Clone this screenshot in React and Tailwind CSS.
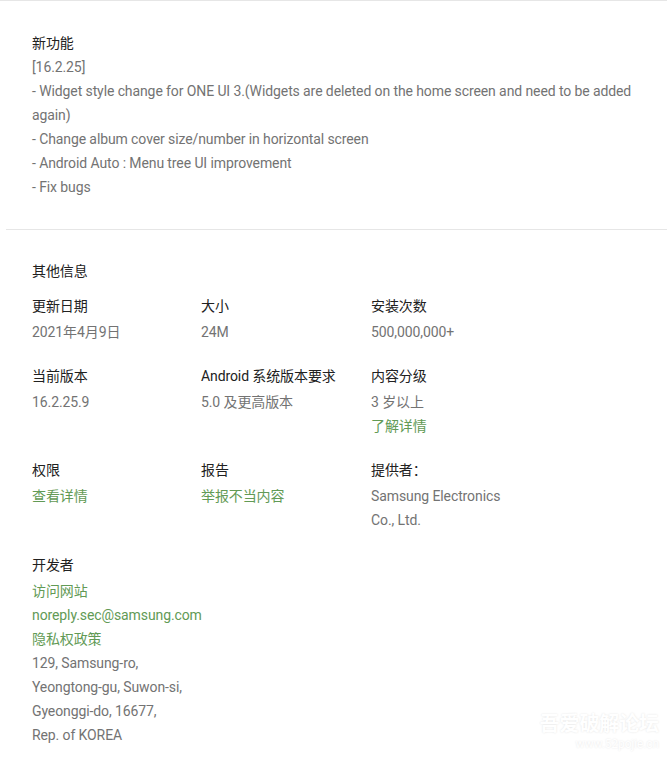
import React from 'react';

// App details block: "what's new" notes and the additional info grid
const notes = [
  '[16.2.25]',
  '- Widget style change for ONE UI 3.(Widgets are deleted on the home screen and need to be added again)',
  '- Change album cover size/number in horizontal screen',
  '- Android Auto : Menu tree UI improvement',
  '- Fix bugs',
];

const infoRows = [
  [
    { label: '更新日期', values: [{ text: '2021年4月9日' }] },
    { label: '大小', values: [{ text: '24M' }] },
    { label: '安装次数', values: [{ text: '500,000,000+' }] },
  ],
  [
    { label: '当前版本', values: [{ text: '16.2.25.9' }] },
    { label: 'Android 系统版本要求', values: [{ text: '5.0 及更高版本' }] },
    { label: '内容分级', values: [{ text: '3 岁以上' }, { text: '了解详情', link: true }] },
  ],
  [
    { label: '权限', values: [{ text: '查看详情', link: true }] },
    { label: '报告', values: [{ text: '举报不当内容', link: true }] },
    { label: '提供者：', values: [{ text: 'Samsung Electronics' }, { text: 'Co., Ltd.' }] },
  ],
];

const developer = [
  { text: '访问网站', link: true },
  { text: 'noreply.sec@samsung.com', link: true },
  { text: '隐私权政策', link: true },
  { text: '129, Samsung-ro,' },
  { text: 'Yeongtong-gu, Suwon-si,' },
  { text: 'Gyeonggi-do, 16677,' },
  { text: 'Rep. of KOREA' },
];

function Value({ item }) {
  return (
    <div className={`leading-6 ${item.link ? 'text-[#629a55]' : 'text-[#737373]'}`}>{item.text}</div>
  );
}

function InfoCell({ cell }) {
  return (
    <div>
      <div className="leading-6 text-[#212121]">{cell.label}</div>
      <div className="mt-[2px]">
        {cell.values.map((v, i) => (
          <Value key={i} item={v} />
        ))}
      </div>
    </div>
  );
}

export default function App() {
  return (
    <div
      className="relative w-[667px] h-[762px] overflow-hidden bg-white text-[14px] tracking-[-0.1px]"
      style={{ fontFamily: 'Roboto, "Noto Sans CJK SC", sans-serif' }}
    >
      <div className="border-t border-[#e6e6e6]" />

      {/* 新功能 */}
      <section className="pl-8 pr-6 pt-[30px] pb-[30px]">
        <div className="leading-6 text-[#212121]">新功能</div>
        {notes.map((line, i) => (
          <div key={i} className="leading-6 text-[#737373]">
            {line}
          </div>
        ))}
      </section>

      <div className="ml-[6px] border-t border-[#e6e6e6]" />

      {/* 其他信息 */}
      <section className="pl-8 pr-6 pt-[29px]">
        <div className="leading-6 text-[#212121]">其他信息</div>
        <div className="mt-[11px] flex flex-col gap-[20px]">
          {infoRows.map((row, i) => (
            <div key={i} className="grid grid-cols-[169px_170px_1fr]">
              {row.map((cell, j) => (
                <InfoCell key={j} cell={cell} />
              ))}
            </div>
          ))}
          <div className="mt-[1px]">
            <div className="leading-6 text-[#212121]">开发者</div>
            <div className="mt-[2px]">
              {developer.map((v, i) => (
                <Value key={i} item={v} />
              ))}
            </div>
          </div>
        </div>
      </section>

      {/* faint watermark */}
      <div className="absolute right-[8px] bottom-[10px] text-right leading-tight text-white [text-shadow:0_0_2px_#e2e2e2] select-none">
        <div className="text-[20px] font-bold">吾爱破解论坛</div>
        <div className="text-[12px]">www.52pojie.cn</div>
      </div>
    </div>
  );
}
